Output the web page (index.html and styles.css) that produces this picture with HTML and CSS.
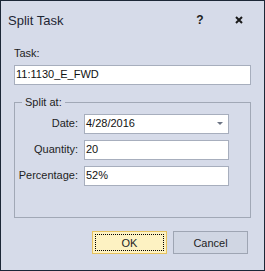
FILE: index.html
```html
<!DOCTYPE html>
<html lang="en">
<head>
  <meta charset="UTF-8">
  <title>Split Task</title>
  <link rel="stylesheet" href="styles.css">
</head>
<body>

  <!-- dialog window -->
  <div class="dialog">
    <div class="titlebar">
      <span class="title">Split Task</span>
      <span class="tb-btn help">?</span>
      <span class="tb-btn close">
        <svg width="8" height="8" viewBox="0 0 8 8"><path d="M1 1L7 7M7 1L1 7" stroke="#1b1b1b" stroke-width="2"/></svg>
      </span>
    </div>

    <div class="content">
      <div class="label">Task:</div>
      <div class="field">11:1130_E_FWD</div>

      <!-- split options -->
      <fieldset class="group">
        <legend>Split at:</legend>
        <div class="form-grid">
          <label>Date:</label>
          <div class="field combo"><span>4/28/2016</span><span class="arrow"></span></div>
          <label>Quantity:</label>
          <div class="field">20</div>
          <label>Percentage:</label>
          <div class="field">52%</div>
        </div>
      </fieldset>

      <div class="buttons">
        <button class="btn ok"><span>OK</span></button>
        <button class="btn">Cancel</button>
      </div>
    </div>
  </div>

</body>
</html>
```

FILE: styles.css
```css
body {
  margin: 0;
  font-family: 'Liberation Sans', Arial, sans-serif;
  font-size: 11px;
  color: #1e1e1e;
}

.dialog {
  width: 265px;
  height: 271px;
  box-sizing: border-box;
  border: 1px solid #1c2737;
  background: #d6dbe9;
}

/* title bar */
.titlebar {
  display: flex;
  align-items: center;
  height: 38px;
  padding: 0 13px 0 7px;
}
.title {
  font-size: 13px;
  color: #1e2533;
}
.tb-btn {
  width: 24px;
  display: flex;
  justify-content: center;
  align-items: center;
}
.help {
  margin-left: auto;
  margin-right: 15px;
  font-weight: bold;
  font-size: 12px;
}

/* body */
.content {
  padding: 0 13px;
}
.label {
  margin-top: 8px;
  line-height: 13px;
}
.field {
  margin-top: 5px;
  height: 20px;
  box-sizing: border-box;
  border: 1px solid #a7aebd;
  background: #fff;
  padding: 0 0 2px 1px;
  line-height: 16px;
  color: #111;
}

/* group box */
.group {
  margin: 11px 0 0;
  padding: 5px 0 31px 3px;
  min-width: 0;
  border: 1px solid #a1a8b6;
}
.group legend {
  margin-left: 4px;
  padding: 0 3px;
  line-height: 13px;
}
.form-grid {
  display: grid;
  grid-template-columns: 60px 145px;
  column-gap: 6px;
  row-gap: 6px;
}
.form-grid label {
  text-align: right;
  line-height: 16px;
  padding-top: 1px;
}
.form-grid .field {
  margin-top: 0;
}
.combo {
  display: flex;
  justify-content: space-between;
  align-items: center;
  padding-right: 5px;
}
.combo span:first-child {
  line-height: 16px;
}
.arrow {
  width: 0;
  height: 0;
  border-left: 3px solid transparent;
  border-right: 3px solid transparent;
  border-top: 3px solid #6c7484;
  margin-bottom: -1px;
}

/* buttons */
.buttons {
  display: flex;
  justify-content: flex-end;
  gap: 6px;
  margin-top: 13px;
  padding-right: 3px;
}
.btn {
  width: 75px;
  height: 23px;
  margin: 0;
  padding: 0;
  font-family: inherit;
  font-size: 11px;
  color: #1e1e1e;
  background: #d0d6e3;
  border: 1px solid #9ea5b3;
}
.btn.ok {
  background: #fdf2c2;
  border-color: #e6c25f;
  padding: 2px;
}
.btn.ok span {
  display: flex;
  height: 100%;
  box-sizing: border-box;
  justify-content: center;
  align-items: center;
  border: 1px dotted #000;
}
```
